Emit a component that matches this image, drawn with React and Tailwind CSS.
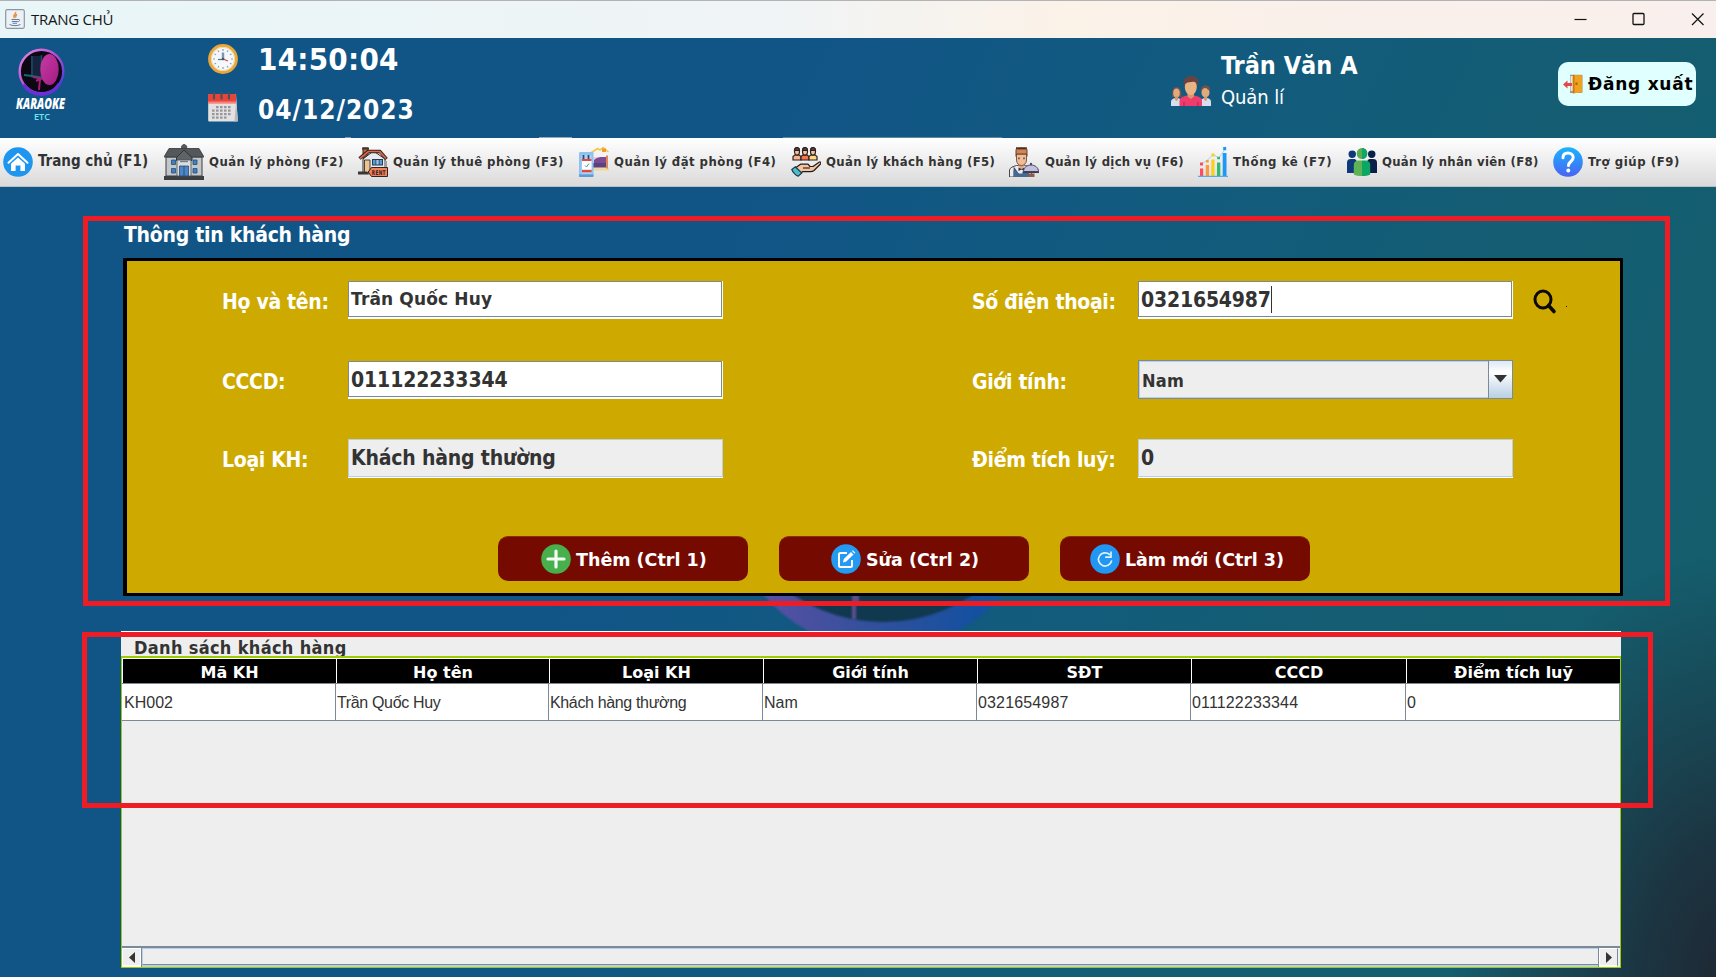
import React from "react";

const TAHOMA = "font-['DejaVu_Sans_Condensed','DejaVu_Sans',sans-serif]";

/* ---------- Icons ---------- */

function JavaIcon() {
  return (
    <svg width="20" height="20" viewBox="0 0 20 20">
      <rect x=".7" y=".7" width="18.6" height="18.6" rx="1.5" fill="#eef1f4" stroke="#8b97a5" strokeWidth="1.2" />
      <path d="M10.5 3c1.5 2-3.5 3-1 6M12 5.5c-2 1-1.500 2-1.200 3.200" stroke="#e8873a" strokeWidth="1.4" fill="none" />
      <path d="M6.500 10.500h6.500M6.800 12.500h6M7.500 14.200h4.500" stroke="#5d7fa3" strokeWidth="1.1" />
      <path d="M13 10.500c2.500-.5 2 2-.3 2.300M4.500 15.500c3 1.500 8 1.500 11 0" stroke="#5d7fa3" strokeWidth="1" fill="none" />
    </svg>
  );
}

function Logo() {
  return (
    <svg width="54" height="76" viewBox="0 0 54 76">
      <defs>
        <linearGradient id="ring" x1="0" y1="0" x2="1" y2="1">
          <stop offset="0" stopColor="#e58be8" />
          <stop offset=".5" stopColor="#b04bd0" />
          <stop offset="1" stopColor="#2b3be0" />
        </linearGradient>
        <linearGradient id="mic" x1="0" y1="0" x2="1" y2="1">
          <stop offset="0" stopColor="#c93aa6" />
          <stop offset="1" stopColor="#a01c82" />
        </linearGradient>
      </defs>
      <circle cx="26.500" cy="23.500" r="21.800" fill="#0d0712" stroke="url(#ring)" strokeWidth="2.400" />
      <path d="M8.500 36.500a21 21 0 0 0 36-1" stroke="#6a2fd6" strokeWidth="3.400" fill="none" />
      <path d="M16 8h11v22h-11z" fill="#16233d" />
      <path d="M17 8v21M26.500 7v22" stroke="#1d4a6b" strokeWidth="1.500" />
      <path d="M9 27l8 1 11 2" stroke="#146a72" strokeWidth="2" />
      <path d="M21 33l4-2-1 11M18 29l10 2" stroke="#a01f78" strokeWidth="2" fill="none" />
      <ellipse cx="34.500" cy="21.500" rx="9.200" ry="15.500" fill="url(#mic)" />
      <text x="1" y="60.500" textLength="49" lengthAdjust="spacingAndGlyphs" fontFamily="Open Sans, sans-serif" fontWeight="800" fontStyle="italic" fontSize="16" fill="#fff">KARAOKE</text>
      <text x="19" y="71.500" textLength="16" lengthAdjust="spacingAndGlyphs" fontFamily="Open Sans, sans-serif" fontWeight="600" fontSize="9.500" fill="#6fe6ef">ETC</text>
    </svg>
  );
}

function ClockIcon() {
  return (
    <svg width="30" height="30" viewBox="0 0 30 30">
      <circle cx="15" cy="15" r="13.400" fill="#f2f8fb" stroke="#e9a73c" strokeWidth="3" />
      <circle cx="15" cy="15" r="11.600" fill="none" stroke="#f7d08a" strokeWidth=".8" />
      <g stroke="#8a9db5" strokeWidth="1.200">
        <path d="M15 5v2M15 23v2M5 15h2M23 15h2M10 6.500l.8 1.500M20 6.500l-.8 1.500M6.500 10l1.500.8M23.500 10l-1.500.8M6.500 20l1.500-.8M23.500 20l-1.500-.8M10 23.500l.8-1.500M20 23.500l-.8-1.500" />
      </g>
      <path d="M15 8.500V15" stroke="#8193ab" strokeWidth="2.400" />
      <path d="M15.500 15.500H10" stroke="#5b6d85" strokeWidth="1.200" />
      <path d="M15 15l5 2" stroke="#e0454b" strokeWidth="1.200" />
      <circle cx="15" cy="15" r="1.300" fill="#4b5568" />
    </svg>
  );
}

function CalendarIcon() {
  return (
    <svg width="30" height="30" viewBox="0 0 30 30">
      <path d="M1 2h27l1.800 26.500a1 1 0 0 1-1 1H1.200a1 1 0 0 1-1-1V3z" fill="#e3e1e1" />
      <path d="M28 11l2 17.500a1 1 0 0 1-1 1h-2.500z" fill="#b9b7b9" />
      <path d="M1 2h26a1 1 0 0 1 1 1v7H0V3a1 1 0 0 1 1-1z" fill="#e8453a" />
      <path d="M0 9.500h28v2.200H0z" fill="#f6837a" />
      <g stroke="#4a5158" strokeWidth="2.200" strokeLinecap="round"><path d="M6 1v5.500M13.500 1v5.500M21 1v5.500" /></g>
      <g fill="#97979d">
        {[14, 17.5, 21, 24.5].map((y) =>
          [4, 8, 12, 16, 20].map((x) =>
            (y === 14 && x < 8) || (y === 24.5 && x > 16) ? null : <rect key={x + "-" + y} x={x} y={y} width="2.600" height="2.200" />
          )
        )}
      </g>
    </svg>
  );
}

function UsersIcon() {
  return (
    <svg width="40" height="30" viewBox="0 0 40 30">
      <path d="M0 30v-4c0-3 3-4 5.500-4s5 1 5 4v4z" fill="#d5ddef" />
      <path d="M29.500 30v-4c0-3 3-4 5.500-4s5 1 5 4v4z" fill="#d5ddef" />
      <path d="M1 21c0-7 1-10 4.500-10s5 3 5 10z" fill="#77504c" />
      <ellipse cx="5.500" cy="17" rx="3.300" ry="4.500" fill="#e2a97c" />
      <path d="M4 20h3v4l-1.500 1L4 24z" fill="#d7986c" />
      <ellipse cx="34.500" cy="16.500" rx="4" ry="5" fill="#e2a97c" />
      <path d="M29.800 15c0-4 2-5.500 5-5.500s4.500 1.500 4.200 5.500c-2-1-3-3-5-3s-3 1.500-4.200 3z" fill="#77504c" />
      <path d="M33 20.500h3v3.500l-1.500 1-1.500-1z" fill="#d7986c" />
      <path d="M8.500 30v-5c0-4 5-5 7.500-5.500h7c3 .5 8 1.500 8 5.500v5z" fill="#ee3c6d" />
      <path d="M13 26v4M27 26v4" stroke="#c52355" strokeWidth="1.200" />
      <path d="M16.500 16h6.500v4.500l-3.200 2.500-3.300-2.500z" fill="#d7986c" />
      <ellipse cx="19.800" cy="11" rx="6" ry="8" fill="#e9b384" />
      <path d="M13 10c-1.500-6 1-10 7-9.500 2-1 6 0 7 3 .5 2 0 5-.6 6.500C25.500 6 24 5.500 21 6c-3 .3-6 0-8 4z" fill="#6b4441" />
    </svg>
  );
}

function ExitIcon() {
  return (
    <svg width="20" height="20" viewBox="0 0 20 20">
      <path d="M7 0.700h11.500a1 1 0 0 1 1 1V18a1 1 0 0 1-1 1H7z" fill="#9a9a94" />
      <path d="M7.500 2h3v15h-3z" fill="#e9e6dc" />
      <path d="M9.800.8l9.400.6v16.800l-9.400 1.300z" fill="#f0a11e" />
      <path d="M9.800.8l1.700.2v18l-1.700.4z" fill="#c97c12" />
      <path d="M4.500 6.500v2.600h4.500v2.800H4.500v2.600L0 10.500z" fill="#e54848" />
      <rect x="12.500" y="8.500" width="2" height="2.500" fill="#a8650c" />
    </svg>
  );
}

function HomeIcon() {
  return (
    <svg width="30" height="30" viewBox="0 0 30 30">
      <circle cx="15" cy="15" r="14.800" fill="#1e96f0" />
      <path d="M5.500 15.800L15 7l9.500 8.800" fill="none" stroke="#fff" strokeWidth="2" strokeLinecap="round" strokeLinejoin="round" />
      <path d="M8 16.800L15 10.400l7 6.400V24h-4.600v-5.600h-4.800V24H8z" fill="#fff" />
    </svg>
  );
}

function BuildingIcon() {
  return (
    <svg width="40" height="36" viewBox="0 0 40 36">
      <path d="M2 13h36v19H2z" fill="#c3c7ca" stroke="#3b3f42" strokeWidth="1" />
      <path d="M0 32h40v4H0z" fill="#3c3f42" />
      <path d="M5 4.500h30L40 13H0z" fill="#54585b" stroke="#33373a" strokeWidth=".8" />
      <path d="M17.500 4.500V2L20 0l2.800 2v2.500z" fill="#55595c" stroke="#33373a" strokeWidth=".6" />
      <path d="M12.500 13.500L20 6l8 7.500v3h-15.500z" fill="#5f6366" stroke="#2f3336" strokeWidth="1" />
      <path d="M13 16h14v16H13z" fill="#dadcde" stroke="#4a4e51" strokeWidth=".8" />
      <path d="M16 17.500h8" stroke="#777c80" strokeWidth="1.400" />
      <g fill="#3f7fc4" stroke="#2c4d72" strokeWidth=".8">
        <path d="M7.500 16h4v4.500h-4zM7.500 24.500h4V29h-4zM29 16h4v4.500h-4zM29 24.500h4V29h-4z" />
        <path d="M15.500 22h9v10h-9z" fill="#4a86c9" />
      </g>
      <path d="M20 22v10" stroke="#2c4d72" strokeWidth=".9" />
    </svg>
  );
}

function RentIcon() {
  return (
    <svg width="30" height="30" viewBox="0 0 30 30">
      <path d="M5 1h5v7l-5 4z" fill="#d4603f" stroke="#2d2522" strokeWidth="1" />
      <path d="M4 0.500h7v2H4z" fill="#40332f" />
      <path d="M5 12L15.500 4 27 12v14H5z" fill="#e7ebef" stroke="#2f2a28" strokeWidth="1" />
      <path d="M1.500 11.500L10 4.500h12l6.500 7.500" fill="none" stroke="#2d2522" strokeWidth="3.400" strokeLinejoin="round" />
      <path d="M2 11.300L10.300 4.500h11.400l6.300 7" fill="none" stroke="#e2694a" strokeWidth="1.700" />
      <path d="M6.500 13h5.500v12.500H6.500z" fill="#edc391" stroke="#3b302b" strokeWidth=".9" />
      <path d="M14 12h11v6.500H14z" fill="#2b3a4c" />
      <path d="M15 13h2.500v4.500H15zM21.500 13H24v4.500h-2.500z" fill="#5b9bd5" />
      <path d="M18.300 13h2.400v4.500h-2.400z" fill="#9cc8ec" />
      <path d="M26 14h3v8h-3z" fill="#9aa0a6" />
      <path d="M0 24.500h9l2 3H0z" fill="#3a3634" />
      <path d="M13.500 20.500h16v9h-16l-3.300-4.500z" fill="#f2805a" stroke="#33241f" strokeWidth="1" />
      <text x="13.800" y="27.500" textLength="14" lengthAdjust="spacingAndGlyphs" fontFamily="DejaVu Sans" fontWeight="700" fontSize="6.500" fill="#33241f">RENT</text>
    </svg>
  );
}

function BookingIcon() {
  return (
    <svg width="30" height="30" viewBox="0 0 30 30">
      <path d="M11 6.500L18.500 1.500 21 3l3-2.500L29.500 5" fill="none" stroke="#f5c64a" strokeWidth="1.600" />
      <path d="M23 1.500h4v3.500h-4z" fill="#f39a2d" />
      <path d="M14 10h12v13H14z" fill="#e4d3e8" />
      <path d="M15 13c3-3 6-3 9-3h3v7H15z" fill="#7d4a93" />
      <path d="M14 16h14v4.500H14z" fill="#5a4378" />
      <path d="M27 8.500h2v14h-2z" fill="#e0865a" />
      <path d="M14 21.500h16v2H14z" fill="#f2d789" />
      <rect x="0" y="5" width="14.500" height="25" rx="1.200" fill="#8fc2ee" />
      <path d="M2.500 8h10v19h-10z" fill="#abd3f5" />
      <path d="M3 12.500h9.500v10H3z" fill="#fff" />
      <path d="M4.500 8v4M9.500 8v4" stroke="#374a70" strokeWidth="1.800" />
      <path d="M3 12h9.500v2H3zM3 23h9.500v2.200H3z" fill="#e3473f" />
      <path d="M6 18.500l1.500 1.500 2.500-3.500" fill="none" stroke="#3fa57c" strokeWidth="1" />
      <path d="M0 27.500h14.500V29a1 1 0 0 1-1 1H1a1 1 0 0 1-1-1z" fill="#5b9bd8" />
    </svg>
  );
}

function CustomersIcon() {
  return (
    <svg width="30" height="30" viewBox="0 0 30 30">
      {[["#f6b58d", 2], ["#f97352", 10], ["#ffd97f", 18]].map(([c, x]) => (
        <g key={x} stroke="#2a211e" strokeWidth="1.200">
          <path d={`M${x} 13V9.500l1.800-1.500h4.400L${x + 8} 9.500V13z`} fill={c} />
          <ellipse cx={x + 4} cy="4.500" rx="2.500" ry="3.600" fill="#f3c09b" />
          <path d={`M${x + 1.500} 3.500c0-4 5-4 5 0z`} fill="#5a4036" />
        </g>
      ))}
      <path d="M5 20.500l4.500-3.300h7.500l2 2.300h3l6-4.300c1.500-.8 2.400.8 1.500 1.800L23 23.500c-1 .9-2 1.200-3.500 1.200h-8L9 26.500z" fill="#f4c4a0" stroke="#231b18" strokeWidth="1.200" strokeLinejoin="round" />
      <path d="M12 21h7" stroke="#231b18" strokeWidth="1.100" />
      <path d="M.8 22.500l3.500-2.800 6.500 6.300-3.500 3.200c-2-.5-5.500-3.500-6.500-6.700z" fill="#4fbcd0" stroke="#1f3e4a" strokeWidth="1.200" />
    </svg>
  );
}

function WaiterIcon() {
  return (
    <svg width="30" height="30" viewBox="0 0 30 30">
      <path d="M0.500 30v-7c.5-2.500 3.500-3.500 7-4.500h9c3 1 5 2.500 6 5V30z" fill="#ececf0" stroke="#4c4846" strokeWidth="1" />
      <path d="M5 20.500l5 7 1 2.500H5zM18 20l-4.500 7.500V30H19z" fill="#466994" stroke="#2e3e55" strokeWidth=".7" />
      <path d="M4.500 23.500L10 26.500h5l5-3V30H4.500z" fill="#466994" />
      <path d="M9.500 15h6v5l-3 2-3-2z" fill="#e3a880" />
      <path d="M7.500 7h10v6c0 3.500-2.500 5.500-5 5.500s-5-2-5-5.500z" fill="#f0bd98" stroke="#5c3829" strokeWidth=".8" />
      <path d="M6.500 10V3.500C6.500 1 8 .8 12.500.8s6 .2 6 2.700V10l-1.500-2.500h-9z" fill="#6e3f2a" />
      <path d="M7.500 2.500h10v4h-10z" fill="#d18652" />
      <path d="M7 1h11" stroke="#3a231a" strokeWidth="1.300" />
      <path d="M10 10.500v1.700M15 10.500v1.700" stroke="#3a2a24" strokeWidth="1.200" />
      <path d="M9.500 20.500l3 1.500 3-1.500v3.500l-3-1.500-3 1.500z" fill="#30323c" />
      <path d="M14.500 24.500c0-4 3.500-6.500 7.500-6.500s7.500 2.500 7.500 6.500z" fill="#c3bfdd" stroke="#4b4a66" strokeWidth="1" />
      <circle cx="22" cy="17" r="1.200" fill="#4b4a66" />
      <path d="M13.500 25.300h16.500" stroke="#3d3b50" strokeWidth="1.500" />
      <path d="M19.500 26.500h6v3.500h-6z" fill="#8c5d49" />
    </svg>
  );
}

function StatsIcon() {
  return (
    <svg width="30" height="30" viewBox="0 0 30 30">
      <path d="M3.500 17L9.500 13 15 7.500l6 3.500 6-9" fill="none" stroke="#a9d3ef" strokeWidth="1" />
      <g>
        <path d="M2 21.500h3.200V29H2zM2 15.500h3v3H2z" fill="#fb4e5e" />
        <path d="M7.800 18h3.200v11H7.800zM8 13h2.700v2.500H8z" fill="#fd9a3b" />
        <path d="M13.300 12.500h3.200V29h-3.200zM13.500 6.500h3v3h-3z" fill="#fbcf1d" />
        <path d="M19 15.500h3.300V29H19zM19.200 9.800h2.800v2.500h-2.800z" fill="#2fba6c" />
        <path d="M24.700 6h3.800v23h-3.800zM25.200 0h3v3.200h-3z" fill="#1e98f5" />
      </g>
      <path d="M0 29.400h30" stroke="#58a8ea" strokeWidth="1.200" />
    </svg>
  );
}

function StaffIcon() {
  return (
    <svg width="30" height="28" viewBox="0 0 30 28">
      <path d="M1.500 6c0-2.500 1.500-3.500 3.700-3.500S9 3.500 9 6s-1.500 4-3.800 4S1.500 8.500 1.500 6zM0 25V14.500c0-2.500 1.500-3.500 4-3.500h2.500c1.500 0 2.500.5 3 1.500L7 25z" fill="#0d3a78" />
      <path d="M21 6c0-2.500 1.500-3.500 3.700-3.500s3.800 1 3.800 3.500-1.500 4-3.800 4S21 8.500 21 6zM30 25V14.500c0-2.500-1.500-3.500-4-3.500h-2.500c-1.500 0-2.500.5-3 1.500L23 25z" fill="#08214b" />
      <ellipse cx="15" cy="5.500" rx="5.300" ry="5.500" fill="#5aae52" />
      <path d="M15 0c3.300 0 5.300 2.400 5.300 5.500S18.300 11 15 11z" fill="#11a566" />
      <path d="M6.800 26.500V17c0-3 1.800-4.500 4.700-4.500H15V28c-3.500 0-6-.5-8.200-1.500z" fill="#5fb356" />
      <path d="M23.200 26.500V17c0-3-1.800-4.500-4.700-4.500H15V28c3.500 0 6-.5 8.200-1.500z" fill="#0ca763" />
    </svg>
  );
}

function HelpIcon() {
  return (
    <svg width="30" height="30" viewBox="0 0 30 30">
      <defs>
        <linearGradient id="help" x1="0" y1="0" x2="0" y2="1">
          <stop offset="0" stopColor="#19b5fb" />
          <stop offset="1" stopColor="#4a62f5" />
        </linearGradient>
      </defs>
      <circle cx="15" cy="15" r="14.800" fill="url(#help)" />
      <path d="M10 10.800C10 7.500 12.200 6 15 6s5.200 1.700 5.200 4.500c0 4-4.700 4-4.700 8" fill="none" stroke="#fff" strokeWidth="3" strokeLinecap="round" />
      <circle cx="15.300" cy="23.600" r="2" fill="#fff" />
    </svg>
  );
}

function SearchIcon() {
  return (
    <svg width="24" height="26" viewBox="0 0 24 26">
      <ellipse cx="10" cy="10.500" rx="8" ry="8.600" fill="none" stroke="#0b0900" strokeWidth="3" />
      <path d="M15.500 16.500l5.500 6" stroke="#0b0900" strokeWidth="3.600" strokeLinecap="round" />
    </svg>
  );
}

function AddIcon() {
  return (
    <svg width="30" height="30" viewBox="0 0 30 30">
      <circle cx="15" cy="15" r="14.800" fill="#47b04c" />
      <path d="M15 7v16M7 15h16" stroke="#f4fbf4" strokeWidth="3.200" strokeLinecap="round" />
    </svg>
  );
}

function EditIcon() {
  return (
    <svg width="30" height="30" viewBox="0 0 30 30">
      <circle cx="15" cy="15" r="14.800" fill="#249bf3" />
      <path d="M16 9H9.500A1.500 1.500 0 0 0 8 10.500v11A1.500 1.500 0 0 0 9.500 23h10a1.500 1.500 0 0 0 1.500-1.500V16" fill="none" stroke="#fff" strokeWidth="2" />
      <path d="M12 18.500l.8-3.500L20 8l2.500 2.400-7.200 7.200z" fill="#fff" />
      <path d="M21 7l.8-.7 2.500 2.400-.8.800z" fill="#fff" />
    </svg>
  );
}

function RefreshIcon() {
  return (
    <svg width="30" height="30" viewBox="0 0 30 30">
      <circle cx="15" cy="15" r="14.800" fill="#2196f3" />
      <path d="M19.500 10.500A6.600 6.600 0 1 0 21.500 17" fill="none" stroke="#dff0fd" strokeWidth="1.700" strokeLinecap="round" />
      <path d="M21 8v5.200h-5.200" fill="none" stroke="#dff0fd" strokeWidth="1.700" strokeLinecap="round" strokeLinejoin="round" />
    </svg>
  );
}

/* ---------- Data ---------- */

const menu = [
  { label: "Trang chủ (F1)", icon: HomeIcon, cls: "w-[161px] gap-[5px] text-[15px]" },
  { label: "Quản lý phòng (F2)", icon: BuildingIcon, cls: "w-[194px] gap-[5px] text-[13px] tracking-[0.45px]" },
  { label: "Quản lý thuê phòng (F3)", icon: RentIcon, cls: "w-[221px] gap-[5px] text-[13px] tracking-[0.43px]" },
  { label: "Quản lý đặt phòng (F4)", icon: BookingIcon, cls: "w-[212px] gap-[5px] text-[13px] tracking-[0.45px]" },
  { label: "Quản lý khách hàng (F5)", icon: CustomersIcon, cls: "w-[218px] gap-[5px] text-[13px] tracking-[0.34px]" },
  { label: "Quản lý dịch vụ (F6)", icon: WaiterIcon, cls: "w-[189px] gap-1.5 text-[13px] tracking-[0.3px]" },
  { label: "Thống kê (F7)", icon: StatsIcon, cls: "w-[149px] gap-[5px] text-[13px] tracking-[0.6px]" },
  { label: "Quản lý nhân viên (F8)", icon: StaffIcon, cls: "w-[206px] gap-[5px] text-[13px] tracking-[0.3px]" },
  { label: "Trợ giúp (F9)", icon: HelpIcon, cls: "w-[160px] gap-[5px] text-[13px] tracking-[0.58px]" },
];

const columns = ["Mã KH", "Họ tên", "Loại KH", "Giới tính", "SĐT", "CCCD", "Điểm tích luỹ"];
const customers = [["KH002", "Trần Quốc Huy", "Khách hàng thường", "Nam", "0321654987", "011122233344", "0"]];

/* ---------- Sections ---------- */

function TitleBar() {
  return (
    <div className="flex h-[38px] items-center border-t border-[#b3b3b5] bg-[linear-gradient(90deg,#e8f6f8_0%,#f0f4f6_45%,#fbf2e8_62%,#faf0eb_80%,#f9f0ed_100%)] pb-0.5 pl-[5px]">
      <JavaIcon />
      <span className="ml-[6px] font-['Open_Sans','Noto_Sans',sans-serif] text-[15px] leading-5 tracking-[-0.25px] text-[#161616]">TRANG CHỦ</span>
      <svg className="ml-auto mr-3" width="130" height="14" viewBox="0 0 130 14" fill="none" stroke="#111">
        <path d="M.500 7.500h12" strokeWidth="1.200" />
        <rect x="59" y="1.500" width="11" height="11" rx="1" strokeWidth="1.300" />
        <path d="M118 1.500l11.500 11.500M129.500 1.500L118 13" strokeWidth="1.200" />
      </svg>
    </div>
  );
}

function Header() {
  return (
    <header className="flex h-[99px] shrink-0 text-white">
      <div className="ml-[15px] w-[193px] pt-2.5"><Logo /></div>
      <div className="w-[963px] pt-[3px]">
        <div className="flex h-[36px] items-center gap-5">
          <ClockIcon />
          <span className="text-[31px] font-bold leading-9 tracking-[0.25px]">14:50:04</span>
        </div>
        <div className="mt-3 flex h-[36px] items-center gap-5">
          <CalendarIcon />
          <span className="pt-1.5 text-[26px] font-bold leading-[30px] tracking-[0.95px]">04/12/2023</span>
        </div>
      </div>
      <div className="flex w-[387px] gap-[10px]">
        <div className="pt-[38px]"><UsersIcon /></div>
        <div className="pt-[12px]">
          <div className="text-[25px] font-bold leading-[32px]">Trần Văn A</div>
          <div className="text-[20px] leading-[30px] tracking-[-0.1px]">Quản lí</div>
        </div>
      </div>
      <button className="mt-6 flex h-[44px] w-[138px] items-center gap-[5px] rounded-[10px] bg-[#e0ffff] pl-[5px] font-['DejaVu_Sans',sans-serif] text-[17px] font-bold tracking-[0.75px] text-black">
        <ExitIcon />
        <span className="whitespace-nowrap pt-0.5">Đăng xuất</span>
      </button>
    </header>
  );
}

function MenuBar() {
  return (
    <>
      <div className="flex h-px shrink-0">
        <i className="ml-[345px] w-1.5 bg-[#7d9db4]" />
        <i className="ml-[188px] w-[33px] bg-[#8ea9bb]" />
        <i className="ml-[211px] w-[219px] bg-[#5f899f]" />
      </div>
      <nav className="flex h-[49px] shrink-0 items-center border-b border-[#b8c0c4] bg-[linear-gradient(#ffffff,#f4f4f4_30%,#dadada)] pb-[1px] pl-[3px] font-bold text-[#333]">
        {menu.map(({ label, icon: Icon, cls }) => (
          <div key={label} className={`flex shrink-0 items-center whitespace-nowrap ${cls}`}>
            <Icon />
            <span>{label}</span>
          </div>
        ))}
      </nav>
    </>
  );
}

function Label({ children, className }) {
  return <span className={`pt-1 text-[21px] font-bold leading-6 tracking-[-0.32px] text-white ${className}`}>{children}</span>;
}

function Field({ children, disabled, className }) {
  return (
    <div className={disabled ? "h-[39px] w-[375px] border-b border-white bg-[#eee]" : "h-[38px] w-[375px] border-b-2 border-r border-white bg-white"}>
      <div className={`flex h-full items-center border pl-0.5 font-bold text-[#333] ${disabled ? "border-[#b8cfe5]" : "border-[#7a8a99]"} ${className}`}>
        {children}
      </div>
    </div>
  );
}

function ActionButton({ icon: Icon, label, className }) {
  return (
    <button className={`flex h-[45px] w-[250px] items-center gap-[5px] rounded-[10px] border-t border-[#8f2f06] bg-[#740a00] font-['DejaVu_Sans',sans-serif] text-[17.5px] font-bold text-white ${className}`}>
      <Icon />
      <span className="pt-0.5">{label}</span>
    </button>
  );
}

function CustomerForm() {
  return (
    <section>
      <h2 className="ml-[124px] pt-px text-[21px] font-bold leading-[28px] tracking-[-0.27px] text-white">Thông tin khách hàng</h2>
      <div className="ml-[123px] mt-[9px] h-[338px] w-[1500px] border-[3px] border-l-4 border-black bg-[#ceaa00]">
        <div className="mt-[19px] flex h-10 items-center pl-[95px]">
          <Label className="w-[126px]">Họ và tên:</Label>
          <Field className="pt-0.5 font-['DejaVu_Sans',sans-serif] text-[17px] tracking-[0.15px]">Trần Quốc Huy</Field>
          <Label className="ml-[249px] w-[166px]">Số điện thoại:</Label>
          <Field className="text-[21px] tracking-[-0.17px]">
            <span className="pt-[3px]">0321654987</span>
            <i className="h-[27px] w-px bg-[#333]" />
          </Field>
          <span className="ml-[20px] mt-1"><SearchIcon /></span>
          <i className="ml-[9px] mt-3 size-px bg-[#222]" />
        </div>
        <div className="mt-10 flex h-10 items-center pl-[95px]">
          <Label className="w-[126px]">CCCD:</Label>
          <Field className="pt-[3px] text-[21px] tracking-[-0.1px]">011122233344</Field>
          <Label className="ml-[249px] w-[166px]">Giới tính:</Label>
          <div className="mb-0.5 flex h-[39px] w-[375px] border border-[#7a8a99] bg-[#eee]">
            <div className="flex flex-1 items-center border border-[#b8cfe5] border-r-0 pl-0.5 pt-0.5 text-[18px] font-bold tracking-[0.2px] text-[#333]">Nam</div>
            <div className="flex w-6 items-center justify-center border-l border-[#7a8a99] bg-[linear-gradient(#dde8f3,#ffffff_30%,#b8cfe5)]">
              <svg width="13" height="8" viewBox="0 0 13 8"><path d="M0 0h13L6.500 7.500z" fill="#333" /></svg>
            </div>
          </div>
        </div>
        <div className="mt-[38px] flex h-10 items-center pl-[95px]">
          <Label className="w-[126px]">Loại KH:</Label>
          <Field disabled className="pt-[3px] text-[21px] tracking-[-0.18px]">Khách hàng thường</Field>
          <Label className="ml-[249px] w-[166px]">Điểm tích luỹ:</Label>
          <Field disabled className="pt-[3px] text-[21px]">0</Field>
        </div>
        <div className="ml-[371px] mt-[58px] flex gap-[31px]">
          <ActionButton icon={AddIcon} label="Thêm (Ctrl 1)" className="pl-[43px]" />
          <ActionButton icon={EditIcon} label="Sửa (Ctrl 2)" className="pl-[52px]" />
          <ActionButton icon={RefreshIcon} label="Làm mới (Ctrl 3)" className="pl-[30px] tracking-[-0.05px]" />
        </div>
      </div>
    </section>
  );
}

const gridCols = "grid grid-cols-[214px_213px_214px_214px_214px_215px_214px]";

function CustomerTable() {
  return (
    <section className="ml-[121px] mt-[35px] flex h-[337px] w-[1500px] flex-col border-t border-white bg-[#eee]">
      <h2 className="h-6 pl-[13px] pt-[5px] text-[18px] font-bold leading-[22px] tracking-[0.33px] text-[#333]">Danh sách khách hàng</h2>
      <div className="flex flex-1 flex-col border border-t-2 border-[#9ccb00]">
        <div className={`h-[26px] border-b border-[#7a8a99] ${gridCols}`}>
          {columns.map((c) => (
            <div key={c} className="flex items-center justify-center border-l border-t border-white bg-black pt-[3px] font-['DejaVu_Sans',sans-serif] text-[16px] font-bold leading-5 text-white">{c}</div>
          ))}
        </div>
        {customers.map((row) => (
          <div key={row[0]} className={`h-[37px] border-b border-[#7a8a99] bg-white font-['Liberation_Sans',Arial,sans-serif] text-[16px] text-[#333] ${gridCols}`}>
            {row.map((v, i) => (
              <div key={i} className={`flex items-center border-r border-[#7a8a99] pt-0.5 ${i === 0 ? "pl-0.5" : "pl-px"} ${i === 1 || i === 2 ? "tracking-[-0.35px]" : i > 3 ? "tracking-[0.15px]" : ""}`}>{v}</div>
            ))}
          </div>
        ))}
        <div className="mt-auto flex h-[21px] border-t-2 border-[#7a8a99]">
          <div className="flex w-[19px] items-center justify-center border border-b-2 border-white">
            <svg width="6" height="11" viewBox="0 0 6 11"><path d="M6 0v11L0 5.500z" fill="#333" /></svg>
          </div>
          <div className="flex-1 border-x border-[#7a8a99]">
            <div className="h-[17px] border-b border-l border-t border-b-[#7a8a99] border-l-[#b8cfe5] border-t-[#b8cfe5]" />
            <div className="h-0.5 bg-[#b8cfe5]" />
          </div>
          <div className="mr-[2px] flex w-[19px] items-center justify-center border border-b-2 border-white border-r-[#7a8a99]">
            <svg width="6" height="11" viewBox="0 0 6 11"><path d="M0 0v11l6-5.500z" fill="#333" /></svg>
          </div>
        </div>
      </div>
    </section>
  );
}

function BackdropLogo() {
  return (
    <svg className="absolute left-[723px] top-[260px] blur-[1px]" width="320" height="352" viewBox="0 0 320 352">
      <defs>
        <linearGradient id="backdropRing" x1="0" y1="0" x2="1" y2="0">
          <stop offset=".1" stopColor="#5c50a4" />
          <stop offset=".45" stopColor="#33509c" />
          <stop offset=".8" stopColor="#1450a0" />
          <stop offset="1" stopColor="#155a96" />
        </linearGradient>
        <clipPath id="backdropClip">
          <circle cx="160" cy="195" r="157" />
        </clipPath>
      </defs>
      <circle cx="160" cy="195" r="157" fill="url(#backdropRing)" />
      <circle cx="160" cy="162" r="162" fill="#10384f" clipPath="url(#backdropClip)" />
      <path d="M131 295v26M134 292v12" stroke="#5c4f8e" strokeWidth="4" />
    </svg>
  );
}

export default function App() {
  return (
    <div className={`relative flex h-[977px] w-[1716px] flex-col overflow-hidden ${TAHOMA}`}>
      <TitleBar />
      <div className="relative flex flex-1 flex-col bg-[radial-gradient(ellipse_290px_440px_at_1740px_950px,#1e2631_0%,#1c3542_35%,transparent_100%),linear-gradient(115deg,#115587_0%,#115587_38%,#125b7e_58%,#145d73_74%,#145f6b_100%)]">
        <BackdropLogo />
        <div className="relative flex flex-1 flex-col">
          <Header />
          <MenuBar />
          <main className="pt-[33px]">
            <CustomerForm />
            <CustomerTable />
          </main>
        </div>
      </div>
      <div className="pointer-events-none absolute left-[83px] top-[216px] h-[390px] w-[1587px] border-[5px] border-[#ee1c24]" />
      <div className="pointer-events-none absolute left-[82px] top-[632px] h-[176px] w-[1571px] border-[5px] border-[#ee1c24]" />
    </div>
  );
}
